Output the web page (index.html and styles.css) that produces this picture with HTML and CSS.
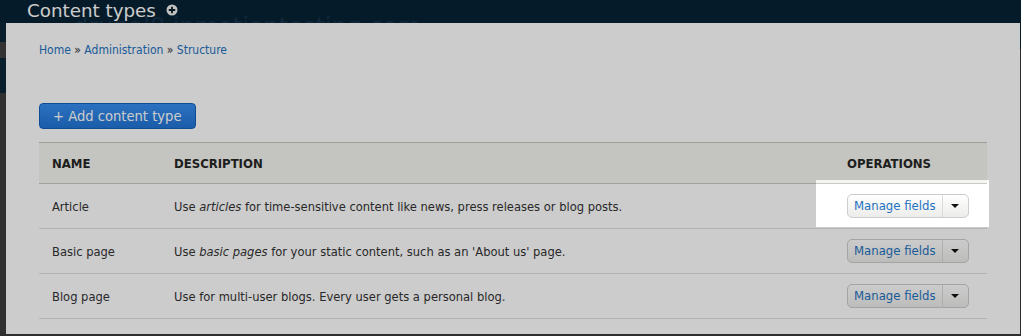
FILE: index.html
```html
<!DOCTYPE html>
<html>
<head>
  <meta charset="UTF-8">
  <title>Content types</title>
  <link rel="stylesheet" href="styles.css">
</head>
<body>
  <header class="topbar">
    <span class="site-name">drupal8.inmotiontesting.com</span>
    <h1 class="page-title">Content types
      <svg class="shortcut" width="12" height="12" viewBox="0 0 12 12">
        <circle cx="6" cy="6" r="5.5" fill="#f2f2f2"/>
        <path d="M6 2.8v6.4M2.8 6h6.4" stroke="#0b1b26" stroke-width="1.8"/>
      </svg>
    </h1>
  </header>
  <div class="frame">
    <div class="behind-left"></div>
    <main class="panel">
      <nav class="breadcrumb">
        <a href="#">Home</a> » <a href="#">Administration</a> » <a href="#">Structure</a>
      </nav>
      <div class="actions">
        <a href="#" class="button-primary">+ Add content type</a>
      </div>
      <table class="types">
        <thead>
          <tr>
            <th class="col-name">Name</th>
            <th>Description</th>
            <th class="col-ops">Operations</th>
          </tr>
        </thead>
        <tbody>
          <tr>
            <td>Article</td>
            <td>Use <em>articles</em> for time-sensitive content like news, press releases or blog posts.</td>
            <td><div class="dropbutton"><a href="#">Manage fields</a><span class="toggle"></span></div></td>
          </tr>
          <tr>
            <td>Basic page</td>
            <td>Use <em>basic pages</em> for your static content, such as an 'About us' page.</td>
            <td><div class="dropbutton"><a href="#">Manage fields</a><span class="toggle"></span></div></td>
          </tr>
          <tr>
            <td>Blog page</td>
            <td>Use for multi-user blogs. Every user gets a personal blog.</td>
            <td><div class="dropbutton"><a href="#">Manage fields</a><span class="toggle"></span></div></td>
          </tr>
        </tbody>
      </table>
      <div class="spotlight"></div>
    </main>
    <div class="behind-right"></div>
  </div>
</body>
</html>
```

FILE: styles.css
```css
html, body {
  margin: 0;
  height: 100%;
  overflow: hidden;
}
body {
  background: #3a3a3a;
  font-family: "DejaVu Sans Condensed", "DejaVu Sans", sans-serif;
  font-size: 13px;
  color: #333;
}
a {
  color: #1f72c0;
  text-decoration: none;
}
.topbar {
  position: relative;
  height: 23px;
  overflow: hidden;
  background: #082234;
}
.site-name {
  position: absolute;
  left: 73px;
  top: 13px;
  font-family: "DejaVu Sans", sans-serif;
  font-size: 24px;
  color: #14324a;
}
.page-title {
  position: relative;
  margin: 0;
  padding-left: 27px;
  display: flex;
  align-items: center;
  gap: 10px;
  height: 20px;
  font-family: "DejaVu Sans", sans-serif;
  font-weight: normal;
  font-size: 18.3px;
  color: #fff;
}
.frame {
  display: flex;
  height: 311px;
}
.behind-left {
  width: 6px;
  background: linear-gradient(#0c2638 0, #0c2638 19px, #404040 19px, #404040 35px, #0c2638 35px, #0c2638 70px, #3c3c3c 70px);
}
.behind-right {
  width: 1px;
  background: linear-gradient(#082234 0, #082234 26px, #3a3a3a 26px);
}
.panel {
  position: relative;
  flex: 1;
  background: #fff;
  padding: 21px 33px 0;
}
.breadcrumb {
  font-size: 12px;
  line-height: 13px;
}
.actions {
  margin-top: 46px;
}
.button-primary {
  display: inline-block;
  box-sizing: border-box;
  height: 26px;
  padding: 0 13px;
  line-height: 24px;
  border: 1px solid #135eb8;
  border-radius: 4px;
  background: linear-gradient(#378df2, #2174d3);
  color: #fff;
  font-size: 14.6px;
}
.types {
  margin-top: 13px;
  width: 100%;
  border-collapse: collapse;
}
.types th {
  height: 40px;
  padding: 0 13px;
  background: #f6f6f0;
  border-top: 1px solid #c6c6c2;
  border-bottom: 1px solid #c9c9c9;
  text-align: left;
  text-transform: uppercase;
  font-weight: bold;
  color: #262626;
}
.types .col-name {
  width: 96px;
}
.types .col-ops {
  width: 127px;
}
.types td {
  height: 44px;
  padding: 0 13px;
  border-bottom: 1px solid #e0e0e0;
  font-size: 12.8px;
}
.dropbutton {
  display: flex;
  box-sizing: border-box;
  width: 122px;
  height: 24px;
  border: 1px solid #cdcdcd;
  border-radius: 5px;
  background: linear-gradient(#ffffff, #ececea);
  font-size: 13px;
}
.dropbutton a {
  flex: 1;
  padding-left: 6px;
  line-height: 22px;
  border-right: 1px solid #dadada;
}
.dropbutton .toggle {
  width: 25px;
  position: relative;
}
.dropbutton .toggle::after {
  content: "";
  position: absolute;
  left: 8px;
  top: 9px;
  border-left: 4px solid transparent;
  border-right: 4px solid transparent;
  border-top: 4px solid #111;
}
.spotlight {
  position: absolute;
  left: 810px;
  top: 157px;
  width: 173px;
  height: 47px;
  box-shadow: 0 0 0 3000px rgba(0, 0, 0, 0.2);
  pointer-events: none;
}
```
